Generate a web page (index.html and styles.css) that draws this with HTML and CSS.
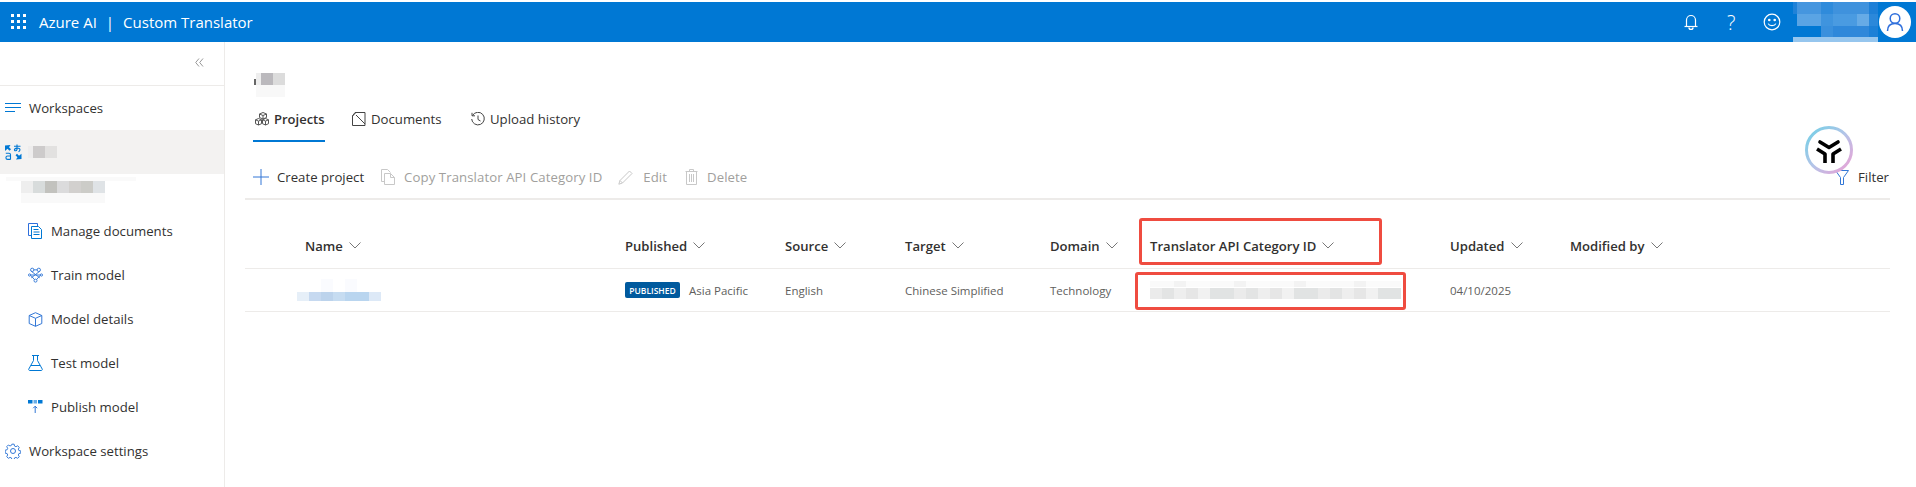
FILE: index.html
```html
<!DOCTYPE html>
<html lang="en">
<head>
<meta charset="utf-8">
<title>Custom Translator</title>
<link rel="stylesheet" href="styles.css">
</head>
<body>
<header class="topbar">
  <svg class="waffle" width="16" height="16" viewBox="0 0 16 16" fill="#fff"><rect x="0" y="0" width="3" height="3"/><rect x="6" y="0" width="3" height="3"/><rect x="12" y="0" width="3" height="3"/><rect x="0" y="6" width="3" height="3"/><rect x="6" y="6" width="3" height="3"/><rect x="12" y="6" width="3" height="3"/><rect x="0" y="12" width="3" height="3"/><rect x="6" y="12" width="3" height="3"/><rect x="12" y="12" width="3" height="3"/></svg>
  <span class="brand">Azure AI</span><span class="brand-sep">|</span><span class="brand">Custom Translator</span>
  <div class="top-actions">
    <svg class="top-bell" width="14" height="16" viewBox="0 0 14 16" fill="none" stroke="#fff" stroke-width="1.2"><path d="M2.500 12V6a4.500 4.500 0 0 1 9 0v6"/><path d="M.5 12.500h13"/><path d="M5 13.500a2 2 0 0 0 4 0" stroke-width="1.500"/></svg>
    <span class="top-help">?</span>
    <svg class="top-smile" width="18" height="18" viewBox="0 0 18 18" fill="none" stroke="#fff" stroke-width="1.2"><circle cx="9" cy="9" r="7.800"/><circle cx="6.300" cy="7" r=".7" fill="#fff"/><circle cx="11.700" cy="7" r=".7" fill="#fff"/><path d="M5.200 10.600c1 2.600 6.600 2.600 7.600 0"/></svg>
    <div class="mosaic-account"></div>
    <div class="avatar"><svg width="20" height="20" viewBox="0 0 20 20" fill="none" stroke="#2f6fdc" stroke-width="1.500"><circle cx="10" cy="6.500" r="4.800"/><path d="M2.500 19c0-5 3-7.500 7.500-7.500s7.500 2.500 7.500 7.500"/></svg></div>
  </div>
</header>

<div class="shell">
  <nav class="sidebar">
    <div class="collapse"><svg width="9" height="9" viewBox="0 0 9 9" fill="none" stroke="#999" stroke-width="1"><path d="M4 .5L.7 4.500 4 8.500M8 .5L4.700 4.500 8 8.500"/></svg></div>
    <div class="nav-item">
      <svg class="nav-icon" width="16" height="10" viewBox="0 0 16 10" fill="none" stroke="#0078d4" stroke-width="1"><path d="M0 .5h16M0 4.500h16M0 8.500h10"/></svg>
      <span>Workspaces</span>
    </div>
    <div class="nav-item nav-selected">
      <svg class="nav-icon" width="17" height="16" viewBox="0 0 17 16" fill="none" stroke="#0078d4" stroke-width="1.100"><path d="M0 1.500L5.500 1 4 3.200l2 2-1.500 1.500-2-2L0 7z" fill="#0078d4" stroke="none"/><path d="M16.500 15L11 15.500l1.500-2.200-2-2 1.500-1.500 2 2 2.500-2z" fill="#0078d4" stroke="none"/><path d="M9 2.200h6.500M12 .5v5c-.5 2-3 1.500-2.500 0 .5-1.500 3.500-2 5-.8 1 1 .3 2.600-1 3"/><path d="M.8 9.200h3.200a1.500 1.500 0 0 1 1.500 1.500v4.800M5.500 12H2.600a1.700 1.700 0 0 0 0 3.400h2.900"/></svg>
      <div class="mosaic-workspace"></div>
    </div>
    <div class="nav-blur"><div class="mosaic-line"></div><div class="mosaic-sub"></div></div>
    <div class="nav-item nav-child">
      <svg class="nav-icon" width="15" height="16" viewBox="0 0 15 16" fill="none" stroke="#2f6fdc" stroke-width="1"><path d="M3 12.500H.5V.5h9v2.500"/><path d="M3.500 3.500h7l3 3v9h-10z" fill="#fff" stroke="#0078d4"/><path d="M5.500 6.500h5M5.500 9h6M5.500 11.500h6" stroke="#0078d4"/></svg>
      <span>Manage documents</span>
    </div>
    <div class="nav-item nav-child">
      <svg class="nav-icon" width="16" height="16" viewBox="0 0 16 16" fill="none" stroke="#3277d6" stroke-width="1"><circle cx="4.500" cy="2.500" r="1.800"/><circle cx="11.500" cy="2.500" r="1.800"/><circle cx="1.700" cy="8" r="1.200"/><circle cx="14.300" cy="8" r="1.200"/><circle cx="8" cy="14" r="1.600"/><path d="M6 2.500h4M3.500 4L12.500 11M12.500 4L3.500 11M3 8.500l4 4.500M13 8.500l-4 4.500M3 8h10"/></svg>
      <span>Train model</span>
    </div>
    <div class="nav-item nav-child">
      <svg class="nav-icon" width="14" height="15" viewBox="0 0 14 15" fill="none" stroke="#3277d6" stroke-width="1"><path d="M7 .7l6.300 2.800v8L7 14.300.7 11.500v-8z"/><path d="M.7 3.500L7 6.300l6.300-2.800M7 6.300v8"/></svg>
      <span>Model details</span>
    </div>
    <div class="nav-item nav-child">
      <svg class="nav-icon" width="15" height="16" viewBox="0 0 15 16" fill="none" stroke="#0078d4" stroke-width="1"><path d="M4 .5h7M5.500.5v5L.8 14a1 1 0 0 0 .9 1.500h11.600a1 1 0 0 0 .9-1.500L9.500 5.500v-5"/><path d="M3 10.500h9"/></svg>
      <span>Test model</span>
    </div>
    <div class="nav-item nav-child">
      <svg class="nav-icon" width="15" height="14" viewBox="0 0 15 14" fill="none"><path d="M0 0h4.500v3.500H0zM10 0h4.500v3.500H10z" fill="#0078d4"/><path d="M5.500 0h3.500v3.500H5.500z" fill="#6aaee6"/><path d="M7.200 13V6.200M5.200 8.200l2-2 2 2" stroke="#3277d6"/></svg>
      <span>Publish model</span>
    </div>
    <div class="nav-item">
      <svg class="nav-icon" width="16" height="16" viewBox="0 0 16 16" fill="none" stroke="#3277d6" stroke-width="1"><circle cx="8" cy="8" r="2.500"/><path d="M6.800.8h2.400l.4 2 1.500.7 1.800-1 1.700 1.700-1 1.800.6 1.500 2 .4v2.400l-2 .4-.6 1.500 1 1.800-1.700 1.700-1.800-1-1.500.6-.4 2H6.800l-.4-2-1.500-.6-1.800 1-1.700-1.700 1-1.800-.6-1.500-2-.4V7.100l2-.4.6-1.500-1-1.800 1.700-1.700 1.800 1 1.500-.7z" transform="translate(.4 .4) scale(.95)"/></svg>
      <span>Workspace settings</span>
    </div>
  </nav>

  <main class="content">
    <div class="title-row"><div class="mosaic-title"></div></div>
    <div class="tabs">
      <div class="tab tab-active">
        <svg class="tab-icon" width="14" height="14" viewBox="0 0 14 14" fill="none" stroke="#555" stroke-width="1"><path d="M8 .5l3.500 1.500v3.500L8 7 4.500 5.500V2zM4.500 2L8 3.500 11.500 2M8 3.500V7"/><path d="M3.500 6.500l3 1.300v3.900l-3 1.300-3-1.300V7.800zM.5 7.800l3 1.300 3-1.300M3.500 9.100v3.900"/><path d="M10.500 6.500l3 1.300v3.900l-3 1.300-3-1.300V7.800zM7.500 7.800l3 1.300 3-1.300M10.500 9.100v3.900"/></svg>
        <span>Projects</span>
      </div>
      <div class="tab tab-docs">
        <svg class="tab-icon" width="14" height="14" viewBox="0 0 14 14" fill="none" stroke="#444" stroke-width="1"><path d="M3 .5h10v13H.5V4z"/><path d="M.5 4L4 .5M4 3l9 9"/></svg>
        <span>Documents</span>
      </div>
      <div class="tab tab-history">
        <svg class="tab-icon" width="14" height="14" viewBox="0 0 14 14" fill="none" stroke="#444" stroke-width="1"><path d="M1.500 3.500a6.300 6.300 0 1 1-.8 3.500"/><path d="M1 .8v3h3M7 3.500V7.500l2.500 1.500"/></svg>
        <span>Upload history</span>
      </div>
    </div>

    <div class="commands">
      <button class="cmd cmd-create">
        <svg class="cmd-icon" width="16" height="16" viewBox="0 0 16 16" fill="none" stroke="#3277d6" stroke-width="1"><path d="M8 0v16M0 8h16"/></svg>
        <span>Create project</span>
      </button>
      <button class="cmd cmd-off cmd-copy">
        <svg class="cmd-icon" width="14" height="16" viewBox="0 0 14 16" fill="none" stroke="#c8c8c8" stroke-width="1"><path d="M3.500 15.500V4.500h6l4 4v7zM9.500 4.500v4h4"/><path d="M3.500 12.500H.5V.5h6l3 3"/></svg>
        <span>Copy Translator API Category ID</span>
      </button>
      <button class="cmd cmd-off cmd-edit">
        <svg class="cmd-icon" width="15" height="15" viewBox="0 0 15 15" fill="none" stroke="#c8c8c8" stroke-width="1"><path d="M11.500 1l2.500 2.500L4.500 13 .8 14.200 2 10.500z"/><path d="M2 10.500L4.500 13"/></svg>
        <span>Edit</span>
      </button>
      <button class="cmd cmd-off cmd-delete">
        <svg class="cmd-icon" width="13" height="16" viewBox="0 0 13 16" fill="none" stroke="#c8c8c8" stroke-width="1"><path d="M.5 2.500h12M4.500 2.500V.5h4v2M1.500 2.500v13h10v-13M4.500 5v8M6.500 5v8M8.500 5v8"/></svg>
        <span>Delete</span>
      </button>
      <button class="cmd cmd-filter">
        <svg class="cmd-icon" width="14" height="15" viewBox="0 0 14 15" fill="none" stroke="#3277d6" stroke-width="1"><path d="M.5.500h13L8.500 7.500v7h-3v-7z"/></svg>
        <span>Filter</span>
      </button>
    </div>

    <div class="grid-table">
      <div class="row row-head">
        <div class="col-name">Name<svg class="sort" width="12" height="7" viewBox="0 0 12 7" fill="none" stroke="#777"><path d="M.5.500L6 6l5.500-5.500"/></svg></div>
        <div>Published<svg class="sort" width="12" height="7" viewBox="0 0 12 7" fill="none" stroke="#777"><path d="M.5.500L6 6l5.500-5.500"/></svg></div>
        <div>Source<svg class="sort" width="12" height="7" viewBox="0 0 12 7" fill="none" stroke="#777"><path d="M.5.500L6 6l5.500-5.500"/></svg></div>
        <div>Target<svg class="sort" width="12" height="7" viewBox="0 0 12 7" fill="none" stroke="#777"><path d="M.5.500L6 6l5.500-5.500"/></svg></div>
        <div>Domain<svg class="sort" width="12" height="7" viewBox="0 0 12 7" fill="none" stroke="#777"><path d="M.5.500L6 6l5.500-5.500"/></svg></div>
        <div>Translator API Category ID<svg class="sort" width="12" height="7" viewBox="0 0 12 7" fill="none" stroke="#777"><path d="M.5.500L6 6l5.500-5.500"/></svg></div>
        <div>Updated<svg class="sort" width="12" height="7" viewBox="0 0 12 7" fill="none" stroke="#777"><path d="M.5.500L6 6l5.500-5.500"/></svg></div>
        <div>Modified by<svg class="sort" width="12" height="7" viewBox="0 0 12 7" fill="none" stroke="#777"><path d="M.5.500L6 6l5.500-5.500"/></svg></div>
      </div>
      <div class="row row-body">
        <div class="cell-name"><div class="mosaic-name"></div></div>
        <div class="cell-published"><span class="badge">PUBLISHED</span><span>Asia Pacific</span></div>
        <div>English</div>
        <div>Chinese Simplified</div>
        <div>Technology</div>
        <div><div class="mosaic-id"></div></div>
        <div>04/10/2025</div>
        <div></div>
      </div>
      <div class="mark mark-head"></div>
      <div class="mark mark-cell"></div>
    </div>

    <div class="float-logo">
      <svg width="48" height="48" viewBox="0 0 48 48" fill="none">
        <defs><linearGradient id="ring" x1="0" y1="0" x2="1" y2="1"><stop offset="0" stop-color="#6fd0e6"/><stop offset=".5" stop-color="#b4c4e8"/><stop offset="1" stop-color="#ee9fd4"/></linearGradient></defs>
        <circle cx="24" cy="24" r="22.500" fill="#fff" stroke="url(#ring)" stroke-width="3"/>
        <path d="M15 16l9 5.500 9-5.500" stroke="#000" stroke-width="3.600" stroke-linecap="round" stroke-linejoin="round"/>
        <path d="M12 23l8 5v9M36 23l-8 5v9" stroke="#000" stroke-width="3.600" stroke-linejoin="round"/>
      </svg>
    </div>
  </main>
</div>
</body>
</html>
```
FILE: styles.css
```css
* { box-sizing: border-box; }
html, body { margin: 0; padding: 0; height: 100%; overflow: hidden; background: #fff; }
body {
  font-family: "Open Sans", "Noto Sans", "Liberation Sans", sans-serif;
  font-size: 13.2px;
  color: #323130;
  padding-top: 2px;
}

/* top bar */
.topbar {
  height: 40px;
  background: #0078d4;
  color: #fff;
  display: flex;
  align-items: center;
  padding-left: 11px;
  font-size: 15px;
}
.waffle { margin-right: 12px; }
.brand-sep { margin: 0 9px; }
.top-actions { margin-left: auto; display: flex; align-items: center; height: 40px; }
.top-bell { margin-right: 29px; }
.top-help { font-size: 20px; font-weight: 300; margin-right: 28px; width: 8px; }
.top-smile { margin-right: 12px; }
.mosaic-account {
  width: 85px;
  height: 40px;
  background:
    linear-gradient(#96c6ee, #96c6ee) 0 35px / 85px 5px no-repeat,
    linear-gradient(90deg, #0078d4 0 4px, #5aa4e4 4px 28px, #3f94de 28px 40px, #4a9be1 40px 64px, #66abe6 64px 76px, #2b88da 76px 85px) 0 12px / 85px 12px no-repeat,
    linear-gradient(90deg, #1f82d8 0 4px, #4596df 4px 28px, #2f8bdb 28px 40px, #3f92dd 40px 76px, #1e80d7 76px 85px) 0 0 / 85px 12px no-repeat,
    linear-gradient(90deg, #0078d4 0 28px, #3a90dd 28px 40px, #2f88da 40px 76px, #1c80d7 76px 85px) 0 24px / 85px 11px no-repeat;
}
.avatar {
  width: 32px;
  height: 32px;
  margin: 0 5px 0 1px;
  border-radius: 50%;
  background: #fff;
  display: flex;
  align-items: center;
  justify-content: center;
}

/* shell */
.shell { display: flex; height: 445px; }

/* sidebar */
.sidebar {
  width: 225px;
  flex: none;
  border-right: 1px solid #edebe9;
  display: flex;
  flex-direction: column;
}
.collapse {
  height: 44px;
  border-bottom: 1px solid #edebe9;
  display: flex;
  justify-content: flex-end;
  align-items: center;
  padding: 0 20px 2px 0;
}
.nav-item {
  height: 44px;
  flex: none;
  display: flex;
  align-items: center;
  padding-left: 5px;
  white-space: nowrap;
}
.nav-item .nav-icon { flex: none; }
.nav-icon { margin-right: 8px; }
.nav-selected { background: #f3f2f1; }
.nav-child { padding-left: 28px; }
.nav-child .nav-icon { width: 15px; margin-right: 8px; }
.nav-blur { height: 35px; padding-top: 3px; }
.mosaic-line { width: 130px; height: 4px; margin-left: 6px; background: #fafafa; }
.mosaic-sub {
  width: 84px;
  height: 22px;
  margin-left: 21px;
  background:
    linear-gradient(#f9f9f9, #f9f9f9) 0 12px / 84px 10px no-repeat,
    linear-gradient(90deg, #eeeeee 0 12px, #d8dcdc 12px 24px, #c2c2be 24px 36px, #dbdbdc 36px 48px, #d2d0ce 48px 60px, #ccccc8 60px 72px, #dfe3e6 72px 84px) 0 0 / 84px 12px no-repeat;
}
.mosaic-workspace {
  width: 29px;
  height: 12px;
  margin-left: -2px;
  background: linear-gradient(90deg, #eeeded 0 5px, #cdcbcb 5px 17px, #e2e1e0 17px 29px);
}

/* content */
.content { flex: 1; min-width: 0; position: relative; padding: 0 26px 0 20px; }
.title-row { height: 71px; padding: 31px 0 0 9px; }
.mosaic-title {
  width: 31px;
  height: 24px;
  background:
    linear-gradient(#666, #666) 0 6px / 2px 6px no-repeat,
    linear-gradient(#f8f8f8, #f8f8f8) 2px 12px / 29px 12px no-repeat,
    linear-gradient(90deg, #eeeeee 0 5px, #bbb9bd 5px 17px, #dcdcdc 17px 29px) 2px 0 / 29px 12px no-repeat;
}
.tabs { display: flex; height: 29px; padding-left: 8px; }
.tab { display: flex; align-items: center; height: 29px; padding-bottom: 16px; border-bottom: 2px solid transparent; white-space: nowrap; }
.tab-active { width: 72px; border-bottom-color: #0078d4; font-weight: 600; font-size: 13px; padding-left: 2px; }
.tab-docs { margin-left: 27px; width: 119px; }
.tab-icon { margin-right: 5px; flex: none; }

.commands {
  display: flex;
  align-items: center;
  height: 58px;
  padding: 14px 0 0 8px;
  border-bottom: 2px solid #edebe9;
}
.cmd {
  display: flex;
  align-items: center;
  border: 0;
  background: none;
  padding: 0;
  font: inherit;
  color: #323130;
  white-space: nowrap;
}
.cmd-icon { margin-right: 8px; flex: none; }
.cmd-off { color: #a19f9d; letter-spacing: .08px; }
.cmd-copy { margin-left: 17px; }
.cmd-copy .cmd-icon { margin-right: 9px; }
.cmd-edit { margin-left: 16px; }
.cmd-edit .cmd-icon { margin-right: 10px; }
.cmd-delete { margin-left: 18px; }
.cmd-delete .cmd-icon { margin-right: 9px; }
.cmd-filter { margin-left: auto; padding-right: 1px; }
.cmd-filter .cmd-icon { margin-right: 9px; }

/* table */
.grid-table { position: relative; }
.row {
  display: grid;
  grid-template-columns: 380px 160px 120px 145px 100px 300px 120px 1fr;
  align-items: center;
  white-space: nowrap;
}
.row-head { height: 69px; padding-top: 24px; font-weight: 600; font-size: 13.1px; border-bottom: 1px solid #edebe9; }
.col-name { padding-left: 60px; }
.sort { margin-left: 6px; margin-bottom: 2px; }
.row-body { height: 43px; font-size: 11.5px; color: #605e5c; border-bottom: 1px solid #edebe9; }
.cell-name { padding-left: 52px; }
.mosaic-name {
  width: 84px;
  height: 22px;
  background:
    linear-gradient(#fafbfe, #fafbfe) 24px 0 / 12px 13px no-repeat,
    linear-gradient(#fafbfe, #fafbfe) 48px 0 / 12px 13px no-repeat,
    linear-gradient(90deg, #e6eff8 0 12px, #c6d9f0 12px 24px, #bcd3ec 24px 36px, #c6dcf1 36px 48px, #b9d5ef 48px 72px, #dde9f7 72px 84px) 0 13px / 84px 9px no-repeat;
}
.cell-published { display: flex; align-items: center; gap: 9px; }
.badge {
  width: 55px;
  height: 16px;
  background: #005a9e;
  color: #fff;
  border-radius: 2px;
  font-size: 8.5px;
  font-weight: 600;
  display: flex;
  align-items: center;
  justify-content: center;
}
.mosaic-id {
  width: 251px;
  height: 18px;
  background:
    repeating-linear-gradient(90deg, #fafafa 0 24px, #f3f3f3 24px 36px, #fbfbfb 36px 60px) 0 0 / 251px 6px no-repeat,
    repeating-linear-gradient(90deg, #ebebeb 0 12px, #e3e4e4 12px 24px, #eeeeee 24px 36px, #e6e6e6 36px 48px, #f1f1f1 48px 60px, #e1e3e3 60px 84px) 0 7px / 251px 11px no-repeat;
}
.mark { position: absolute; border: 3px solid #ef4c40; border-radius: 3px; }
.mark-head { left: 894px; top: 18px; width: 243px; height: 47px; }
.mark-cell { left: 890px; top: 72px; width: 271px; height: 38px; }

.float-logo { position: absolute; left: 1580px; top: 84px; width: 48px; height: 48px; }
```
